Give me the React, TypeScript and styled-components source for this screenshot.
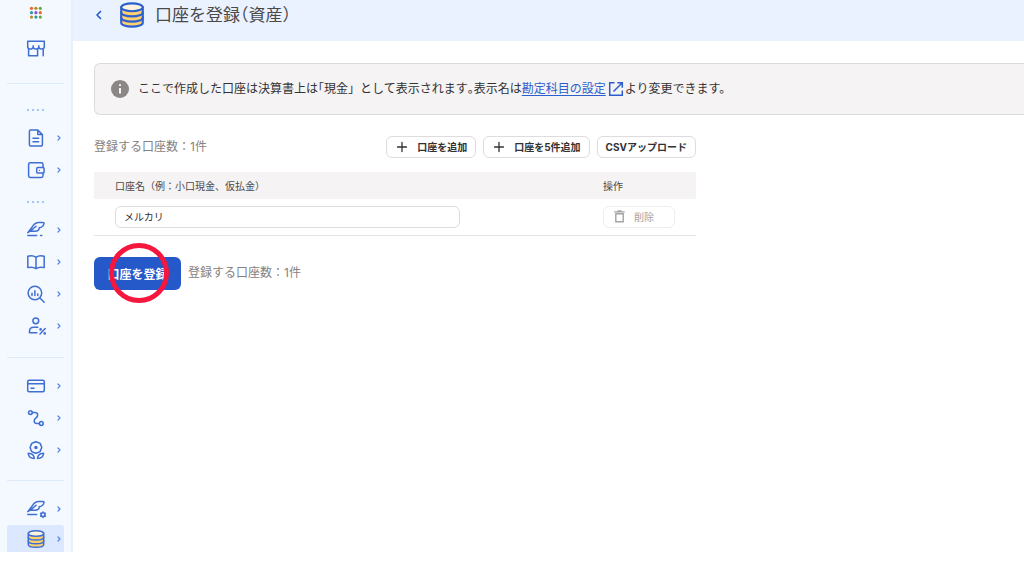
import React, { useState } from "react";
import styled, { createGlobalStyle } from "styled-components";

const GlobalStyle = createGlobalStyle`
  * { box-sizing: border-box; }
  body {
    margin: 0;
    background: #fff;
    color: #4a4848;
    font-family: Inter, "Noto Sans CJK JP", sans-serif;
    font-size: 12px;
    line-height: 18px;
  }
  button, input { font-family: inherit; }
`;

const Layout = styled.div`
  display: flex;
  align-items: flex-start;
`;

const Sidebar = styled.nav`
  flex: 0 0 73px;
  padding: 1px 7px 0;
  background: #f4f8ff;
  border-right: 2px solid #e8f0fc;
`;

const NavGroup = styled.ul`
  list-style: none;
  margin: 0;
  padding: 0;
`;

const NavLink = styled.a<{ $height?: number; $active?: boolean }>`
  display: flex;
  align-items: center;
  justify-content: space-between;
  height: ${(p) => p.$height ?? 32}px;
  padding: 0 2px 0 19px;
  color: #3f6fd1;
  background: ${(p) => (p.$active ? "#dce8ff" : "transparent")};
  border-radius: ${(p) => (p.$active ? "3px 3px 0 0" : "0")};
  text-decoration: none;
`;

const Divider = styled.hr<{ $top: number; $bottom: number }>`
  height: 1px;
  margin: ${(p) => p.$top}px 0 ${(p) => p.$bottom}px;
  border: 0;
  background: #dceafc;
`;

const Dots = styled.div<{ $top: number }>`
  display: flex;
  gap: 3px;
  width: 17px;
  margin: ${(p) => p.$top}px 0 11px 20px;
`;

const Dot = styled.span`
  flex: 0 0 2px;
  height: 2px;
  border-radius: 1px;
  background: #8db4f5;
`;

const Main = styled.main`
  flex: 1;
  min-width: 0;
`;

const Header = styled.header`
  display: flex;
  align-items: center;
  height: 41px;
  padding: 0 21px 11px;
  background: #eaf2ff;
  color: #2c5fce;
`;

const BackButton = styled.button`
  display: flex;
  width: 10px;
  margin-right: 14px;
  padding: 0;
  border: 0;
  background: none;
  color: inherit;
`;

const Title = styled.h1`
  margin: 0 0 0 9px;
  color: #4a4848;
  font-size: 17px;
  line-height: 24px;
  font-weight: 400;
  font-feature-settings: "halt";
`;

const Content = styled.div`
  padding: 22px 0 0 21px;
`;

const Notice = styled.section`
  display: flex;
  align-items: center;
  min-height: 52px;
  padding: 0 17px 0 16px;
  border: 1px solid #dddadb;
  border-right: 0;
  border-radius: 6px 0 0 6px;
  background: #f5f3f4;
  color: #333132;
`;

const NoticeText = styled.p`
  margin: 0 0 0 9px;
`;

const TightMark = styled.span`
  font-feature-settings: "halt";
`;

const TextLink = styled.a`
  color: #2c5fce;
  text-underline-offset: 2px;

  svg {
    margin: 0 1px 0 2px;
    vertical-align: -4px;
  }
`;

const Form = styled.form`
  width: 100%;
  max-width: 602px;
`;

const Toolbar = styled.div`
  display: flex;
  align-items: center;
  justify-content: space-between;
  padding: 21px 0 14px;
`;

const Count = styled.span`
  color: #858282;
`;

const ButtonRow = styled.div`
  display: flex;
  gap: 7px;
`;

const SmallButton = styled.button<{ $muted?: boolean }>`
  display: flex;
  align-items: center;
  gap: 8px;
  height: 22px;
  padding: ${(p) => (p.$muted ? "0 20px 0 9px" : "0 8px")};
  border: 1px solid ${(p) => (p.$muted ? "#efeded" : "#dedcdc")};
  border-radius: 6px;
  background: #fff;
  color: ${(p) => (p.$muted ? "#a5a3a3" : "#333132")};
  font-size: 10px;
  line-height: 16px;
  font-weight: ${(p) => (p.$muted ? 400 : 700)};
  white-space: nowrap;
`;

const Table = styled.table`
  width: 100%;
  border-collapse: collapse;
  table-layout: fixed;
  font-size: 10px;
  line-height: 16px;
`;

const HeadCell = styled.th<{ $action?: boolean }>`
  width: ${(p) => (p.$action ? "93px" : "auto")};
  height: 27px;
  padding: 0 0 0 ${(p) => (p.$action ? 0 : 21)}px;
  background: #f5f3f4;
  font-weight: 400;
  text-align: left;
`;

const Cell = styled.td<{ $action?: boolean }>`
  height: 36px;
  padding: 0 0 0 ${(p) => (p.$action ? 0 : 21)}px;
  border-bottom: 1px solid #e6e4e4;
`;

const NameInput = styled.input`
  display: block;
  width: 100%;
  max-width: 345px;
  height: 22px;
  padding: 0 8px;
  border: 1px solid #dedcdc;
  border-radius: 6px;
  background: #fff;
  color: #333132;
  font-size: 10px;
`;

const Footer = styled.div`
  display: flex;
  align-items: center;
  gap: 7px;
  margin-top: 21px;
`;

const SubmitWrap = styled.div`
  position: relative;
`;

const SubmitButton = styled.button`
  display: block;
  width: 87px;
  height: 33px;
  padding: 0;
  border: 0;
  border-radius: 6px;
  background: #2558c8;
  color: #fff;
  font-size: 12px;
  font-weight: 700;
`;

const Ring = styled.span`
  position: absolute;
  top: -14px;
  left: 15px;
  width: 60px;
  height: 60px;
  border: 5px solid #f5173d;
  border-radius: 50%;
  pointer-events: none;
`;

type IconProps = { children: React.ReactNode; size?: number; box?: number; stroke?: number };

const Icon = ({ children, size = 20, box = 20, stroke = 1.5 }: IconProps) => (
  <svg
    width={size}
    height={size}
    viewBox={`0 0 ${box} ${box}`}
    fill="none"
    stroke="currentColor"
    strokeWidth={stroke}
    strokeLinecap="round"
    strokeLinejoin="round"
    aria-hidden="true"
  >
    {children}
  </svg>
);

const appColors = ["#e8682f", "#b98a2c", "#63a83a", "#2b9c98", "#8a4fe0", "#e8682f", "#b98a2c", "#2b9c98", "#63a83a"];

const AppsIcon = () => (
  <Icon>
    {appColors.map((color, i) => (
      <circle key={i} cx={5.5 + (i % 3) * 4.4} cy={5.3 + Math.floor(i / 3) * 4.4} r="1.6" fill={color} stroke="none" />
    ))}
  </Icon>
);

const ShopIcon = () => (
  <Icon>
    <path d="M1.7 3.2h16.6v5.6a2.75 2.3 0 0 1-5.5 0V7.8v1a2.8 2.3 0 0 1-5.6 0v-1v1a2.75 2.3 0 0 1-5.5 0z" />
    <path d="M2.6 11v6.8h9V11.2M17.2 11.2v6.6" />
  </Icon>
);

const DocumentIcon = () => (
  <Icon>
    <path d="M11.8 2H4.6a1.2 1.2 0 0 0-1.2 1.2v13.6A1.2 1.2 0 0 0 4.6 18h10.6a1.2 1.2 0 0 0 1.2-1.2V6.6zM11.8 2v4.6h4.6M7 10.3h5.6M7 13.8h5.6" />
  </Icon>
);

const WalletIcon = () => (
  <Icon>
    <path d="M17 7.6V4.4A1.6 1.6 0 0 0 15.4 2.8H4.2a1.6 1.6 0 0 0-1.6 1.6v11.4a1.6 1.6 0 0 0 1.6 1.6h11.2a1.6 1.6 0 0 0 1.6-1.6v-2.7" />
    <rect x="10.7" y="7.6" width="7.4" height="5.5" rx="1.2" />
    <circle cx="13.5" cy="10.4" r=".6" fill="currentColor" stroke="none" />
  </Icon>
);

const QuillPath = () => (
  <path d="M1.800 12.600 6.200 7Q8.300 2.900 12.200 2.500h4.600q1.500 0 1.200 1.200-.4 2.400-2.600 3.400l-2.200.700q.300 1.500-1.100 2.500-1.200.900-3.100.9H4.300L1.800 12.600M4.300 11.200l5.800-5" />
);

const EntryIcon = () => (
  <Icon>
    <QuillPath />
    <path d="M1.800 15.600h8.800M14.600 15.600h1.200" />
  </Icon>
);

const BookIcon = () => (
  <Icon>
    <path d="M10 5.300Q6.600 2.900 1.800 4.300v11.300q4.800-1.300 8.200 1.100 3.400-2.400 8.200-1.100V4.300Q13.400 2.900 10 5.300zM10 5.300v11.200" />
  </Icon>
);

const AnalysisIcon = () => (
  <Icon>
    <circle cx="8.900" cy="9" r="6.800" />
    <path d="m13.900 14 4.300 4.200M6 9.200v2.300M8.900 6.800v4.700M11.800 10v1.500" />
  </Icon>
);

const TaxIcon = () => (
  <Icon>
    <circle cx="9.800" cy="4.800" r="2.900" />
    <path d="M10.800 16.700H3.500v-1.500q0-4 4.300-4h4M14 18l5.200-5.400" />
    <circle cx="14.600" cy="13.400" r=".6" />
    <circle cx="18.700" cy="17.400" r=".6" />
  </Icon>
);

const CardIcon = () => (
  <Icon>
    <rect x="1.700" y="4.200" width="16.600" height="11.600" rx="1.500" />
    <path d="M1.700 7.800h16.600M5 12.300h3" />
  </Icon>
);

const RouteIcon = () => (
  <Icon>
    <circle cx="4.400" cy="4.600" r="1.900" />
    <circle cx="15.300" cy="15.500" r="1.900" />
    <path d="M6.300 4.600h2.500c3.600 0 3.600 3.500 1.200 5.200s-2.800 5.700 1 5.700h2.400" />
  </Icon>
);

const FlowerIcon = () => (
  <Icon>
    <path d="m9.900 1.700 2.100.8 2.100.9.900 2 .8 2.100-.9 2.100-.8 2-2.100.9-2.100.7-2.100-.7-2.100-.9-.9-2-.7-2.100.8-2.100.9-2 2-.9z" />
    <circle cx="9.900" cy="7.400" r="1" fill="currentColor" />
    <path d="M8.300 18.400q-5.600 0-6.100-5.200 5.700.2 6.100 5.200zm3.200 0q5.600 0 6.100-5.200-5.700.2-6.100 5.200z" />
  </Icon>
);

const EntrySettingsIcon = () => (
  <Icon>
    <QuillPath />
    <path d="M1.800 15.600h8.800" />
    <circle cx="17" cy="15.700" r="1.900" />
    <path d="M17 13v.2M17 18.200v.2M14.700 14.300l.1.100M19.200 17l.1.100M14.700 17.100l.1-.1M19.200 14.400l.1-.1" />
  </Icon>
);

const DatabaseIcon = ({ size = 20 }: { size?: number }) => (
  <Icon size={size}>
    <path d="M2.300 4.500v11c0 1.600 3.400 2.800 7.700 2.800s7.700-1.200 7.700-2.800v-11" fill="#ffd06f" />
    <ellipse cx="10" cy="4.500" rx="7.700" ry="2.800" fill="#fff3df" />
    <path d="M2.300 8.200c0 1.600 3.400 2.800 7.700 2.800s7.700-1.200 7.700-2.800M2.300 11.900c0 1.600 3.400 2.800 7.700 2.800s7.700-1.200 7.700-2.800" />
  </Icon>
);

const ChevronIcon = () => (
  <Icon size={6} box={6} stroke={1.2}>
    <path d="m2 1 2 2-2 2" stroke="#4f82e4" />
  </Icon>
);

const PlusIcon = () => (
  <Icon size={14} box={14} stroke={1.3}>
    <path d="M7 2.500v9M2.500 7h9" />
  </Icon>
);

type NavEntry = { label: string; icon: React.ReactNode };

const NavList = ({ items }: { items: NavEntry[] }) => (
  <NavGroup>
    {items.map((item) => (
      <li key={item.label}>
        <NavLink href="#" aria-label={item.label}>
          {item.icon}
          <ChevronIcon />
        </NavLink>
      </li>
    ))}
  </NavGroup>
);

const DotRow = ({ top }: { top: number }) => (
  <Dots $top={top} aria-hidden="true">
    <Dot />
    <Dot />
    <Dot />
    <Dot />
  </Dots>
);

export default function App() {
  const [name, setName] = useState("メルカリ");

  return (
    <>
      <GlobalStyle />
      <Layout>
        <Sidebar>
          <NavLink href="#" $height={24} aria-label="アプリ">
            <AppsIcon />
          </NavLink>
          <NavLink href="#" $height={46} aria-label="事業所">
            <ShopIcon />
          </NavLink>
          <Divider $top={12} $bottom={0} />
          <DotRow top={25} />
          <NavList
            items={[
              { label: "書類", icon: <DocumentIcon /> },
              { label: "支払", icon: <WalletIcon /> },
            ]}
          />
          <DotRow top={15} />
          <NavList
            items={[
              { label: "仕訳", icon: <EntryIcon /> },
              { label: "帳簿", icon: <BookIcon /> },
              { label: "分析", icon: <AnalysisIcon /> },
              { label: "税務", icon: <TaxIcon /> },
            ]}
          />
          <Divider $top={15} $bottom={12} />
          <NavList
            items={[
              { label: "カード", icon: <CardIcon /> },
              { label: "連携", icon: <RouteIcon /> },
              { label: "成長", icon: <FlowerIcon /> },
            ]}
          />
          <Divider $top={14} $bottom={12} />
          <NavList items={[{ label: "仕訳設定", icon: <EntrySettingsIcon /> }]} />
          <NavLink href="#" $height={27} $active aria-label="口座" aria-current="page">
            <DatabaseIcon />
            <ChevronIcon />
          </NavLink>
        </Sidebar>

        <Main>
          <Header>
            <BackButton type="button" aria-label="戻る">
              <Icon size={10} box={10} stroke={1.7}>
                <path d="M6.500 1.500 3 5l3.500 3.500" />
              </Icon>
            </BackButton>
            <DatabaseIcon size={28} />
            <Title>口座を登録（資産）</Title>
          </Header>

          <Content>
            <Notice>
              <svg width="18" height="18" viewBox="0 0 18 18" aria-hidden="true">
                <circle cx="9" cy="9" r="9" fill="#8a8786" />
                <path d="M9 4.200v1.800M9 8v5.500" stroke="#f5f3f4" strokeWidth="2" />
              </svg>
              <NoticeText>
                ここで作成した口座は決算書上は<TightMark>「</TightMark>現金」として表示されます
                <TightMark>。</TightMark>表示名は
                <TextLink href="#">
                  勘定科目の設定
                  <svg width="16" height="16" viewBox="0 0 16 16" fill="none" stroke="currentColor" strokeWidth="1.500" aria-hidden="true">
                    <path d="M6.500 1.700H1.700v12.600h12.600V9.500M9.300 1.700h5v5M14.300 1.700 5.500 10.500" />
                  </svg>
                </TextLink>
                より変更できます。
              </NoticeText>
            </Notice>

            <Form onSubmit={(e) => e.preventDefault()}>
              <Toolbar>
                <Count>登録する口座数：1件</Count>
                <ButtonRow>
                  <SmallButton type="button">
                    <PlusIcon />
                    口座を追加
                  </SmallButton>
                  <SmallButton type="button">
                    <PlusIcon />
                    口座を5件追加
                  </SmallButton>
                  <SmallButton type="button">CSVアップロード</SmallButton>
                </ButtonRow>
              </Toolbar>

              <Table>
                <thead>
                  <tr>
                    <HeadCell scope="col">
                      <label htmlFor="account-name">口座名（例：小口現金、仮払金）</label>
                    </HeadCell>
                    <HeadCell scope="col" $action>
                      操作
                    </HeadCell>
                  </tr>
                </thead>
                <tbody>
                  <tr>
                    <Cell>
                      <NameInput id="account-name" type="text" value={name} onChange={(e) => setName(e.target.value)} />
                    </Cell>
                    <Cell $action>
                      <SmallButton type="button" $muted>
                        <Icon size={13} box={13} stroke={1.4}>
                          <path d="M2.800 3.800v7.900h7.400V3.800zM1.800 1.900h9.400M5 .9h3" strokeLinejoin="miter" />
                        </Icon>
                        削除
                      </SmallButton>
                    </Cell>
                  </tr>
                </tbody>
              </Table>

              <Footer>
                <SubmitWrap>
                  <SubmitButton type="submit">口座を登録</SubmitButton>
                  <Ring />
                </SubmitWrap>
                <Count>登録する口座数：1件</Count>
              </Footer>
            </Form>
          </Content>
        </Main>
      </Layout>
    </>
  );
}
